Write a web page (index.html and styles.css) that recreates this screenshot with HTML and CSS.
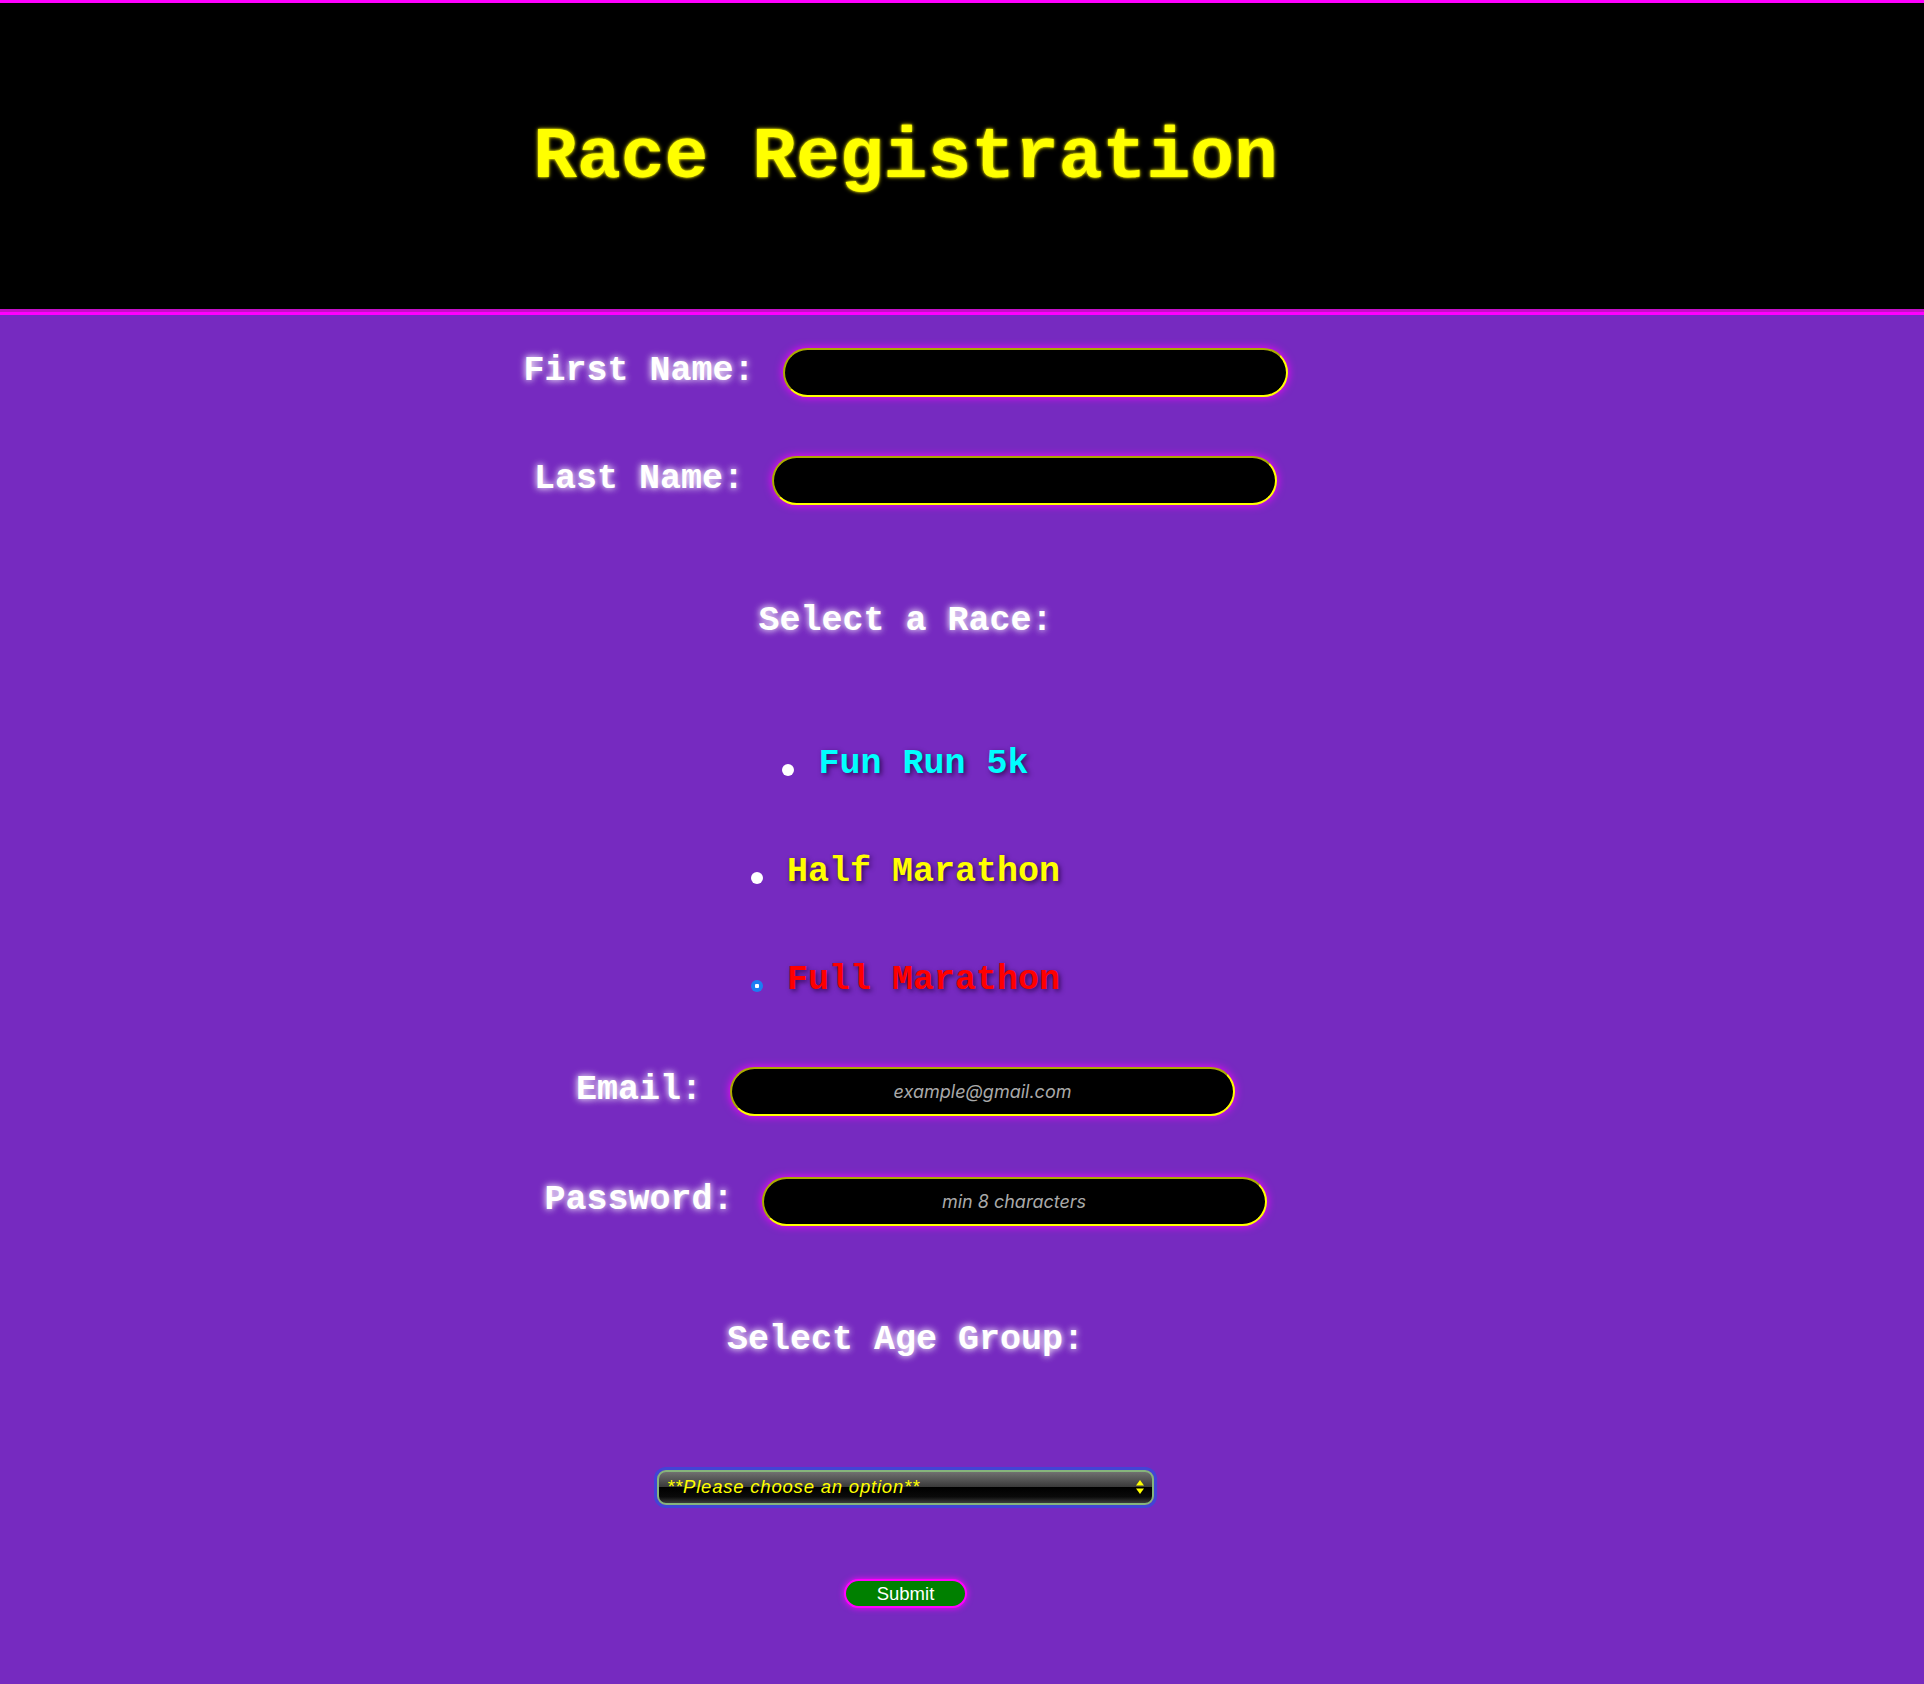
FILE: index.html
```html
<!DOCTYPE html>
<html lang="en">
<head>
<meta charset="utf-8">
<title>Race Registration</title>
<link rel="stylesheet" href="styles.css">
</head>
<body>
<header class="site-header">
  <h1 class="title">Race Registration</h1>
</header>
<main class="page">
  <form class="reg-form">
    <div class="field-row row-first">
      <label class="field-label" for="first">First Name:</label>
      <input class="text-input" id="first" type="text">
    </div>
    <div class="field-row row-last">
      <label class="field-label" for="last">Last Name:</label>
      <input class="text-input" id="last" type="text">
    </div>

    <h2 class="section-title race-title">Select a Race:</h2>

    <div class="race-option race-fun">
      <input class="race-radio" type="radio" name="race" id="fun">
      <label class="race-label fun" for="fun">Fun Run 5k</label>
    </div>
    <div class="race-option race-half">
      <input class="race-radio" type="radio" name="race" id="half">
      <label class="race-label half" for="half">Half Marathon</label>
    </div>
    <div class="race-option race-full">
      <input class="race-radio" type="radio" name="race" id="full" checked>
      <label class="race-label full" for="full">Full Marathon</label>
    </div>

    <div class="field-row row-email">
      <label class="field-label" for="email">Email:</label>
      <input class="text-input" id="email" type="email" placeholder="example@gmail.com">
    </div>
    <div class="field-row row-password">
      <label class="field-label" for="pw">Password:</label>
      <input class="text-input" id="pw" type="password" placeholder="min 8 characters">
    </div>

    <h2 class="section-title age-title">Select Age Group:</h2>

    <div class="select-wrap">
      <select class="age-select">
        <option>**Please choose an option**</option>
        <option>18 - 29</option>
        <option>30 - 39</option>
        <option>40+</option>
      </select>
      <svg class="select-arrows" width="10" height="16" viewBox="0 0 10 16" aria-hidden="true">
        <path d="M5 1 L9 6.5 L1 6.5 Z" fill="#ffff00"/>
        <path d="M5 15 L9 9.5 L1 9.5 Z" fill="#ffff00"/>
      </svg>
    </div>

    <div class="submit-row">
      <button class="submit-btn" type="submit">Submit</button>
    </div>
  </form>
</main>
</body>
</html>
```

FILE: styles.css
```css
html, body {
  margin: 0;
  padding: 0;
}

body {
  background: #762ac0;
  font-family: "Courier New", "Liberation Mono", monospace;
  min-height: 1684px;
}

.site-header {
  background: #000;
  border-top: 3px solid #ff00ff;
  border-bottom: 3px solid #c30fc8;
  height: 312px;
  box-sizing: border-box;
  display: flex;
  align-items: center;
  padding-right: 113px;
  padding-top: 3px;
}

.title {
  margin: 0;
  width: 100%;
  text-align: center;
  font-family: "Courier New", "Liberation Mono", monospace;
  font-weight: bold;
  font-size: 73px;
  color: #ffff00;
  text-shadow: 0 0 4px #d8d000, 0 0 2px #ffff00;
}

.page {
  border-top: 3px solid #ff00ff;
  padding-right: 113px;
}

.reg-form {
  display: flex;
  flex-direction: column;
  align-items: center;
}

.field-row {
  display: flex;
  align-items: center;
  gap: 28px;
}

.row-first { margin-top: 33px; }
.row-last { margin-top: 59px; }
.row-email { margin-top: 67px; }
.row-password { margin-top: 61px; }

.field-label {
  font-family: "Courier New", "Liberation Mono", monospace;
  font-weight: bold;
  font-size: 35px;
  line-height: 40px;
  padding-bottom: 4px;
  color: #ffffff;
  text-shadow: 0 0 6px rgba(255, 255, 255, 0.9), 0 0 10px rgba(255, 255, 255, 0.45);
}

.text-input {
  width: 505px;
  height: 49px;
  box-sizing: border-box;
  background: #000;
  border: 2px inset #ffff00;
  border-radius: 25px;
  box-shadow: 0 0 8px #ff00ff;
  color: #ffffff;
  font-family: "Inter", "Liberation Sans", sans-serif;
  font-style: italic;
  font-size: 18px;
  text-align: center;
  outline: none;
  padding: 0 20px;
}

.text-input::placeholder {
  color: #a9a9a9;
  font-style: italic;
}

.section-title {
  margin: 0;
  font-family: "Courier New", "Liberation Mono", monospace;
  font-weight: bold;
  font-size: 35px;
  line-height: 40px;
  color: #ffffff;
  text-shadow: 0 0 6px rgba(255, 255, 255, 0.9), 0 0 10px rgba(255, 255, 255, 0.45);
}

.race-title { margin-top: 96px; }
.age-title { margin-top: 94px; }

.race-option {
  display: flex;
  align-items: flex-start;
  gap: 24px;
  height: 40px;
}

.race-fun { margin-top: 103px; }
.race-half { margin-top: 68px; }
.race-full { margin-top: 68px; }

.race-radio {
  appearance: none;
  -webkit-appearance: none;
  width: 12px;
  height: 12px;
  margin: 20px 0 0 0;
  border-radius: 50%;
  background: #ffffff;
  border: none;
  box-sizing: border-box;
  flex: none;
}

.race-radio:checked {
  background: radial-gradient(circle, #ffffff 0 2px, #1a7ef2 2.5px);
}

.race-label {
  font-family: "Courier New", "Liberation Mono", monospace;
  font-weight: bold;
  font-size: 35px;
  line-height: 40px;
  text-shadow: 2px 2px 5px rgba(40, 5, 70, 0.85);
}

.race-label.fun { color: #00ffff; }
.race-label.half { color: #ffff00; }
.race-label.full { color: #ff0000; }

.select-wrap {
  position: relative;
  margin-top: 110px;
  width: 497px;
  height: 35px;
  border-radius: 9px;
  box-shadow: 0 0 0 3px #4244d6;
}

.age-select {
  appearance: none;
  -webkit-appearance: none;
  width: 100%;
  height: 100%;
  box-sizing: border-box;
  border: 2px solid #86b47c;
  border-radius: 9px;
  background:
    linear-gradient(to bottom, #707070 0%, #3a3a3a 48%, #000000 50%, #0a0a0a 80%, #3c3c3c 100%);
  color: #ffff00;
  font-family: "Liberation Sans", "Helvetica", sans-serif;
  font-style: italic;
  font-weight: 500;
  font-size: 18.5px;
  letter-spacing: 0.8px;
  padding: 0 24px 3px 8px;
  outline: none;
}

.select-arrows {
  position: absolute;
  right: 9px;
  top: 9px;
  pointer-events: none;
}

.submit-row {
  margin-top: 74px;
}

.submit-btn {
  width: 123px;
  height: 29px;
  box-sizing: border-box;
  background: #008000;
  border: 2px solid #ff00ff;
  border-radius: 15px;
  box-shadow: 0 0 6px #ff00ff;
  color: #ffffff;
  font-family: "Liberation Sans", "Helvetica", sans-serif;
  font-size: 18.5px;
  padding: 0;
  cursor: pointer;
}
```
